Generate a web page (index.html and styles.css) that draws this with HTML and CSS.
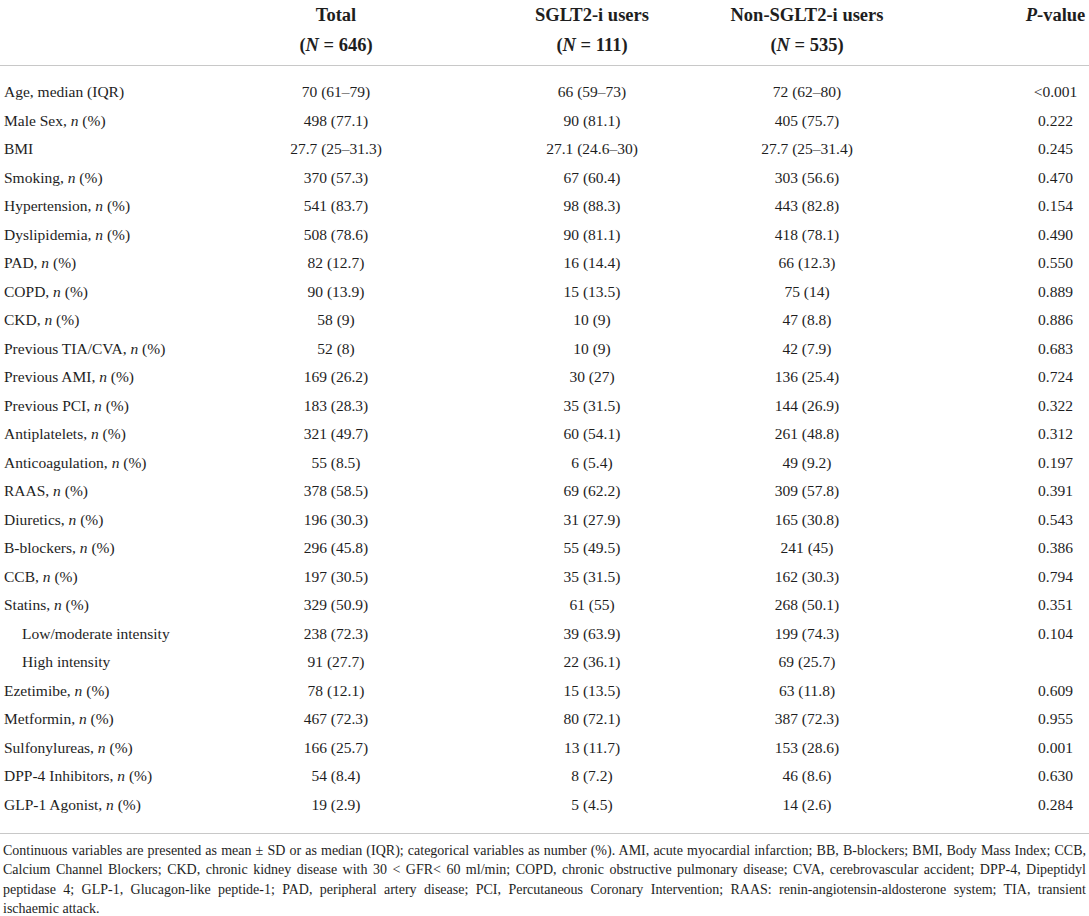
FILE: index.html
```html
<!DOCTYPE html>
<html>
<head>
<meta charset="utf-8">
<link rel="stylesheet" href="styles.css">
</head>
<body>
<table class="tbl">
  <colgroup>
    <col class="c1"><col class="c2"><col class="c3"><col class="c4"><col class="c5">
  </colgroup>
  <thead>
    <tr>
      <th class="lab"></th>
      <th>Total<br>(<i>N</i> = 646)</th>
      <th>SGLT2-i users<br>(<i>N</i> = 111)</th>
      <th>Non-SGLT2-i users<br>(<i>N</i> = 535)</th>
      <th class="pv"><i>P</i>-value</th>
    </tr>
  </thead>
  <tbody>
    <tr class="first"><td class="lab">Age, median (IQR)</td><td>70 (61–79)</td><td>66 (59–73)</td><td>72 (62–80)</td><td class="pv">&lt;0.001</td></tr>
    <tr><td class="lab">Male Sex, <i>n</i> (%)</td><td>498 (77.1)</td><td>90 (81.1)</td><td>405 (75.7)</td><td class="pv">0.222</td></tr>
    <tr><td class="lab">BMI</td><td>27.7 (25–31.3)</td><td>27.1 (24.6–30)</td><td>27.7 (25–31.4)</td><td class="pv">0.245</td></tr>
    <tr><td class="lab">Smoking, <i>n</i> (%)</td><td>370 (57.3)</td><td>67 (60.4)</td><td>303 (56.6)</td><td class="pv">0.470</td></tr>
    <tr><td class="lab">Hypertension, <i>n</i> (%)</td><td>541 (83.7)</td><td>98 (88.3)</td><td>443 (82.8)</td><td class="pv">0.154</td></tr>
    <tr><td class="lab">Dyslipidemia, <i>n</i> (%)</td><td>508 (78.6)</td><td>90 (81.1)</td><td>418 (78.1)</td><td class="pv">0.490</td></tr>
    <tr><td class="lab">PAD, <i>n</i> (%)</td><td>82 (12.7)</td><td>16 (14.4)</td><td>66 (12.3)</td><td class="pv">0.550</td></tr>
    <tr><td class="lab">COPD, <i>n</i> (%)</td><td>90 (13.9)</td><td>15 (13.5)</td><td>75 (14)</td><td class="pv">0.889</td></tr>
    <tr><td class="lab">CKD, <i>n</i> (%)</td><td>58 (9)</td><td>10 (9)</td><td>47 (8.8)</td><td class="pv">0.886</td></tr>
    <tr><td class="lab">Previous TIA/CVA, <i>n</i> (%)</td><td>52 (8)</td><td>10 (9)</td><td>42 (7.9)</td><td class="pv">0.683</td></tr>
    <tr><td class="lab">Previous AMI, <i>n</i> (%)</td><td>169 (26.2)</td><td>30 (27)</td><td>136 (25.4)</td><td class="pv">0.724</td></tr>
    <tr><td class="lab">Previous PCI, <i>n</i> (%)</td><td>183 (28.3)</td><td>35 (31.5)</td><td>144 (26.9)</td><td class="pv">0.322</td></tr>
    <tr><td class="lab">Antiplatelets, <i>n</i> (%)</td><td>321 (49.7)</td><td>60 (54.1)</td><td>261 (48.8)</td><td class="pv">0.312</td></tr>
    <tr><td class="lab">Anticoagulation, <i>n</i> (%)</td><td>55 (8.5)</td><td>6 (5.4)</td><td>49 (9.2)</td><td class="pv">0.197</td></tr>
    <tr><td class="lab">RAAS, <i>n</i> (%)</td><td>378 (58.5)</td><td>69 (62.2)</td><td>309 (57.8)</td><td class="pv">0.391</td></tr>
    <tr><td class="lab">Diuretics, <i>n</i> (%)</td><td>196 (30.3)</td><td>31 (27.9)</td><td>165 (30.8)</td><td class="pv">0.543</td></tr>
    <tr><td class="lab">B-blockers, <i>n</i> (%)</td><td>296 (45.8)</td><td>55 (49.5)</td><td>241 (45)</td><td class="pv">0.386</td></tr>
    <tr><td class="lab">CCB, <i>n</i> (%)</td><td>197 (30.5)</td><td>35 (31.5)</td><td>162 (30.3)</td><td class="pv">0.794</td></tr>
    <tr><td class="lab">Statins, <i>n</i> (%)</td><td>329 (50.9)</td><td>61 (55)</td><td>268 (50.1)</td><td class="pv">0.351</td></tr>
    <tr><td class="lab sub">Low/moderate intensity</td><td>238 (72.3)</td><td>39 (63.9)</td><td>199 (74.3)</td><td class="pv">0.104</td></tr>
    <tr><td class="lab sub">High intensity</td><td>91 (27.7)</td><td>22 (36.1)</td><td>69 (25.7)</td><td class="pv"></td></tr>
    <tr><td class="lab">Ezetimibe, <i>n</i> (%)</td><td>78 (12.1)</td><td>15 (13.5)</td><td>63 (11.8)</td><td class="pv">0.609</td></tr>
    <tr><td class="lab">Metformin, <i>n</i> (%)</td><td>467 (72.3)</td><td>80 (72.1)</td><td>387 (72.3)</td><td class="pv">0.955</td></tr>
    <tr><td class="lab">Sulfonylureas, <i>n</i> (%)</td><td>166 (25.7)</td><td>13 (11.7)</td><td>153 (28.6)</td><td class="pv">0.001</td></tr>
    <tr><td class="lab">DPP-4 Inhibitors, <i>n</i> (%)</td><td>54 (8.4)</td><td>8 (7.2)</td><td>46 (8.6)</td><td class="pv">0.630</td></tr>
    <tr class="last"><td class="lab">GLP-1 Agonist, <i>n</i> (%)</td><td>19 (2.9)</td><td>5 (4.5)</td><td>14 (2.6)</td><td class="pv">0.284</td></tr>
  </tbody>
</table>
<div class="note">
  <span class="jl">Continuous variables are presented as mean ± SD or as median (IQR); categorical variables as number (%). AMI, acute myocardial infarction; BB, B-blockers; BMI, Body Mass Index; CCB,</span>
  <span class="jl">Calcium Channel Blockers; CKD, chronic kidney disease with 30 &lt; GFR&lt; 60 ml/min; COPD, chronic obstructive pulmonary disease; CVA, cerebrovascular accident; DPP-4, Dipeptidyl</span>
  <span class="jl">peptidase 4; GLP-1, Glucagon-like peptide-1; PAD, peripheral artery disease; PCI, Percutaneous Coronary Intervention; RAAS: renin-angiotensin-aldosterone system; TIA, transient</span>
  <span class="ln">ischaemic attack.</span>
</div>
</body>
</html>
```

FILE: styles.css
```css
html, body {
  margin: 0;
  padding: 0;
  background: #ffffff;
}
body {
  font-family: "Liberation Serif", "Times New Roman", serif;
  color: #1e1e1e;
  width: 1089px;
}
.tbl {
  width: 1089px;
  border-collapse: collapse;
  table-layout: fixed;
}
.c1 { width: 210px; }
.c2 { width: 252px; }
.c3 { width: 260px; }
.c4 { width: 170px; }
.c5 { width: 197px; }

.tbl th {
  font-weight: bold;
  font-size: 18.5px;
  line-height: 30px;
  padding: 0 0 5px 0;
  vertical-align: top;
  text-align: center;
  border-bottom: 1px solid #c8c8c8;
}
.tbl td {
  font-size: 15.5px;
  height: 28.5px;
  padding: 0;
  text-align: center;
  vertical-align: middle;
  white-space: nowrap;
}
.tbl td.lab {
  text-align: left;
  padding-left: 4px;
}
.tbl td.sub {
  padding-left: 22px;
}
.tbl .pv {
  padding-left: 130px;
}
.tbl tr.first td {
  padding-top: 12px;
}
.tbl tr.last td {
  padding-bottom: 14px;
  border-bottom: 1px solid #c8c8c8;
}
.note {
  font-size: 14px;
  line-height: 19.3px;
  padding: 7px 3px 0 3px;
}
.note .jl {
  display: block;
  text-align: justify;
  text-align-last: justify;
}
.note .ln {
  display: block;
}
```
